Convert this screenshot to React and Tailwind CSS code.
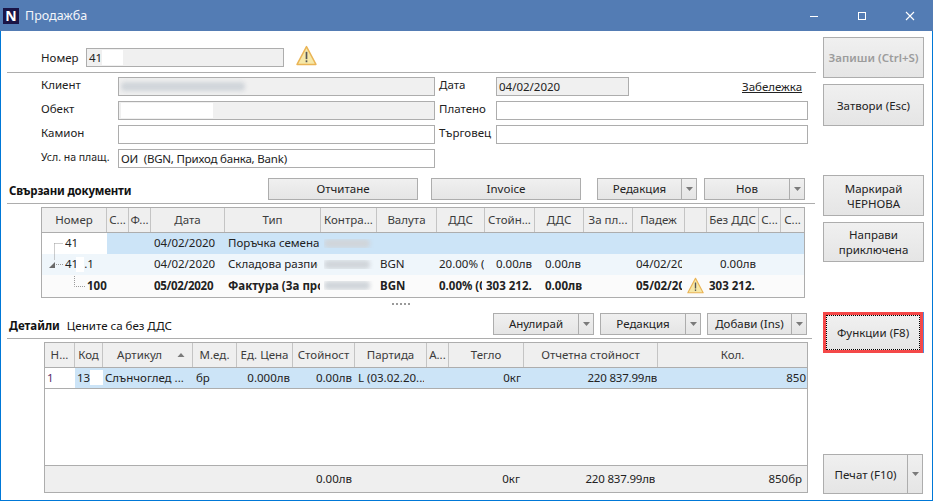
import React from "react";

const FONT = "font-['Noto_Sans','Open_Sans',sans-serif]";

function Warn({ className = "" }) {
  return (
    <svg viewBox="0 0 20 20" className={className}>
      <path d="M10 1.5 L19 18.5 L1 18.5 Z" fill="#f6e8a8" stroke="#eab455" strokeWidth="1.4" strokeLinejoin="round" />
      <rect x="9.2" y="6.5" width="1.6" height="7" fill="#555" />
      <rect x="9.2" y="14.6" width="1.6" height="1.8" fill="#555" />
    </svg>
  );
}

function Caret({ className = "w-[7px] h-[4px]", up }) {
  return (
    <svg viewBox="0 0 7 4" className={className}>
      <path d={up ? "M0 4H7L3.5 0Z" : "M0 0H7L3.5 4Z"} fill="#7a7a7a" />
    </svg>
  );
}

const btn = "border border-[#adadad] bg-gradient-to-b from-[#f0f0f0] to-[#e5e5e5] flex items-center justify-center text-center leading-[15px] shrink-0";

function Split({ w, label }) {
  return (
    <div className={`${btn} h-[22px] !justify-start text-[#222]`} style={{ width: w }}>
      <div className="flex-1 text-center whitespace-nowrap pb-[2px]">{label}</div>
      <div className="w-[15px] h-full border-l border-[#adadad] flex items-center justify-center shrink-0">
        <Caret />
      </div>
    </div>
  );
}

function Input({ w, disabled, children }) {
  return (
    <div
      className={`h-[19px] border border-[#adadad] flex items-center pl-[2px] overflow-hidden whitespace-nowrap shrink-0 ${disabled ? "bg-[#f0f0f0]" : "bg-white"}`}
      style={{ width: w }}
    >
      {children}
    </div>
  );
}

function Blur({ w }) {
  return <div className="h-[9px] bg-[#d0d5da] blur-[2px] rounded-sm shrink-0" style={{ width: w }} />;
}

function White({ w, h = 15 }) {
  return <span className="inline-block bg-white shrink-0" style={{ width: w, height: h }} />;
}

const topCols = [65, 22, 22, 74, 96, 56, 60, 48, 50, 49, 49, 52, 22, 52, 22, 23];
const topHead = ["Номер", "С...", "Ф...", "Дата", "Тип", "Контра...", "Валута", "ДДС", "Стойн...", "ДДС", "За пл...", "Падеж", "", "Без ДДС", "С...", "С..."];
const botCols = [30, 28, 90, 44, 56, 62, 72, 22, 75, 134, 149];
const botHead = ["Н...", "Код", "Артикул", "М.ед.", "Ед. Цена", "Стойност", "Партида", "А...", "Тегло", "Отчетна стойност", "Кол."];

function Head({ cols, labels }) {
  return (
    <div className="flex h-[25px] bg-[#efefef] border-b border-[#adadad] text-[#3c3c3c]">
      {cols.map((w, i) => (
        <div
          key={i}
          className={`relative border-r border-[#c4c4c4] last:border-r-0 flex items-center justify-center overflow-hidden whitespace-nowrap shrink-0 ${labels[i] === "Артикул" ? "pr-[16px]" : ""}`}
          style={{ width: w }}
        >
          {labels[i]}
          {labels[i] === "Артикул" ? <Caret up className="absolute right-[7px] top-[10px] w-[8px] h-[4px]" /> : null}
        </div>
      ))}
    </div>
  );
}

function Cell({ w, right, pad = 3, pr = 3, children, className = "" }) {
  return (
    <div className={`shrink-0 flex items-center h-full pb-[1px] ${className}`} style={{ width: w, paddingLeft: pad, paddingRight: pr }}>
      <div className={`w-full overflow-hidden whitespace-nowrap flex items-center ${right ? "justify-end" : ""}`}>{children}</div>
    </div>
  );
}

function Row1() {
  return (
    <div className="flex h-[21px] items-center">
      <Cell w={65} pad={23} className="bg-white relative">
        <span>41</span><White w={10} h={15} />
      </Cell>
      <div className="flex-1 h-full bg-[#cce4f7] flex items-center">
        <Cell w={22} /><Cell w={22} />
        <Cell w={74}>04/02/2020</Cell>
        <Cell w={96} pr={1}>Поръчка семена</Cell>
        <Cell w={56}><Blur w={46} /></Cell>
      </div>
    </div>
  );
}

function Row2() {
  return (
    <div className="flex h-[21px] items-center bg-[#eff6fb]">
      <Cell w={65} pad={23}>
        <span>41</span><span className="-ml-[2px] flex"><White w={8} h={15} /></span><span>.1</span>
      </Cell>
      <Cell w={22} /><Cell w={22} />
      <Cell w={74}>04/02/2020</Cell>
      <Cell w={96}>Складова разпис</Cell>
      <Cell w={56}><Blur w={46} /></Cell>
      <Cell w={60}>BGN</Cell>
      <Cell w={48} pad={2} pr={1}>20.00% (0</Cell>
      <Cell w={50} right>0.00лв</Cell>
      <Cell w={49} right>0.00лв</Cell>
      <Cell w={49} />
      <Cell w={52}>04/02/2020</Cell>
      <Cell w={22} />
      <Cell w={52} right>0.00лв</Cell>
    </div>
  );
}

function Row3() {
  return (
    <div className="flex h-[22px] items-center bg-[#fbfbfb] font-bold">
      <Cell w={65} pad={45} pr={0}>100</Cell>
      <Cell w={22} /><Cell w={22} />
      <Cell w={74} pad={3} pr={0}><span className="tracking-[-0.3px]">05/02/2020</span></Cell>
      <Cell w={96} pr={1}>Фактура (За продажба)</Cell>
      <Cell w={56}><Blur w={46} /></Cell>
      <Cell w={60}>BGN</Cell>
      <Cell w={48} pad={2} pr={3}>0.00% (0%)</Cell>
      <Cell w={50} pad={1} pr={1}>303 212.</Cell>
      <Cell w={49} right pr={2}>0.00лв</Cell>
      <Cell w={49} />
      <Cell w={52}>05/02/2020</Cell>
      <Cell w={22} pad={2} pr={0}><Warn className="w-[17px] h-[17px] shrink-0" /></Cell>
      <Cell w={52} pad={2} pr={1}>303 212.</Cell>
    </div>
  );
}

function SectionRule({ w = 808 }) {
  return <div className="ml-[6px] h-px bg-[#adadad]" style={{ width: w }} />;
}

export default function App() {
  return (
    <div className={`w-[933px] h-[501px] flex flex-col bg-white text-[11.5px] leading-[16px] text-[#222] overflow-hidden ${FONT}`}>
      {/* Title bar */}
      <div className="h-[31px] bg-[#537cb4] flex items-center shrink-0">
        <div className="ml-[3px] w-[16px] h-[16px] bg-[#1a1446] text-white font-bold text-[14px] flex items-center justify-center leading-none">N</div>
        <div className="ml-[6px] text-[#f2f5fa] text-[12.5px]">Продажба</div>
        <div className="ml-auto flex items-center">
          <svg viewBox="0 0 10 10" className="w-[10px] h-[10px] mr-[38px]"><path d="M1 5.5H9" stroke="#fff" strokeWidth="1" /></svg>
          <svg viewBox="0 0 10 10" className="w-[10px] h-[10px] mr-[38px]"><rect x="1.5" y="1.5" width="7" height="7" fill="none" stroke="#fff" strokeWidth="1" /></svg>
          <svg viewBox="0 0 10 10" className="w-[10px] h-[10px] mr-[18px]"><path d="M1 1L9 9M9 1L1 9" stroke="#fff" strokeWidth="1.1" /></svg>
        </div>
      </div>

      {/* Body */}
      <div className="flex-1 flex border-x border-b border-[#0078d7] min-h-0">
        {/* Left column */}
        <div className="w-[815px] shrink-0">
          <div className="mt-[17px] ml-[40px] flex items-center h-[19px]">
            <div className="w-[45px]">Номер</div>
            <Input w={198} disabled>
              <span>41</span><White w={21} />
            </Input>
            <Warn className="ml-[12px] -mt-[5px] w-[21px] h-[21px] shrink-0" />
          </div>
          <div className="mt-[5px]"><SectionRule w={809} /></div>

          <div className="mt-[4px] ml-[40px] flex flex-col gap-[5px]">
            <div className="flex items-center">
              <div className="w-[77px] -mt-[4px]">Клиент</div>
              <Input w={317} disabled><Blur w={124} /></Input>
              <div className="ml-[4px] w-[57px] -mt-[4px]">Дата</div>
              <Input w={133} disabled>04/02/2020</Input>
              <div className="ml-[113px] underline whitespace-nowrap">Забележка</div>
            </div>
            <div className="flex items-center">
              <div className="w-[77px] -mt-[4px]">Обект</div>
              <Input w={317} disabled><White w={92} /></Input>
              <div className="ml-[4px] w-[57px] -mt-[4px]">Платено</div>
              <Input w={312} />
            </div>
            <div className="flex items-center">
              <div className="w-[77px] -mt-[4px]">Камион</div>
              <Input w={317} />
              <div className="ml-[4px] w-[57px] -mt-[4px]">Търговец</div>
              <Input w={312} />
            </div>
            <div className="flex items-center">
              <div className="w-[77px] text-[10.5px] whitespace-nowrap -mt-[4px]">Усл. на плащ.</div>
              <Input w={317}><span className="tracking-[-0.2px]">ОИ&nbsp; (BGN, Приход банка, Bank)</span></Input>
            </div>
          </div>

          {/* Linked documents */}
          <div className="mt-[10px] ml-[8px] flex items-center h-[22px]">
            <div className="w-[259px] font-bold self-end leading-[18px] text-[#111] whitespace-nowrap tracking-[-0.2px]">Свързани документи</div>
            <div className={`${btn} w-[150px] h-[22px] pb-[2px]`}>Отчитане</div>
            <div className={`${btn} w-[150px] h-[22px] ml-[13px] pb-[2px]`}>Invoice</div>
            <div className="ml-[16px]"><Split w={100} label="Редакция" /></div>
            <div className="ml-[7px]"><Split w={101} label="Нов" /></div>
          </div>
          <div className="mt-[3px]"><SectionRule /></div>

          <div className="mt-[3px] ml-[40px] w-[764px] h-[91px] border border-[#adadad]">
            <Head cols={topCols} labels={topHead} />
            <div className="relative">
              <svg viewBox="0 0 50 64" className="absolute left-0 top-0 w-[50px] h-[64px] z-10 pointer-events-none">
                <path d="M12.5 10.5H21M12.5 10.5V27M12 31.5H21M32.5 43V53.5H43" fill="none" stroke="#9a9a9a" strokeWidth="1" strokeDasharray="1 1" />
                <path d="M7 35L13 29V35Z" fill="#6a6a6a" />
              </svg>
              <Row1 />
              <Row2 />
              <Row3 />
            </div>
          </div>

          <div className="h-[15px] ml-[391px] flex items-start pt-[5px] gap-[2px]">
            {[0, 1, 2, 3, 4].map((i) => (
              <span key={i} className="w-[2px] h-[2px] bg-[#9a9a9a]" />
            ))}
          </div>

          {/* Details */}
          <div className="ml-[8px] flex items-center h-[22px]">
            <div className="w-[484px] flex self-end leading-[18px] whitespace-nowrap">
              <span className="font-bold text-[#111]">Детайли</span>
              <span className="ml-[7px] text-[#111]">Цените са без ДДС</span>
            </div>
            <Split w={101} label="Анулирай" />
            <div className="ml-[6px]"><Split w={101} label="Редакция" /></div>
            <div className="ml-[6px]"><Split w={100} label="Добави (Ins)" /></div>
          </div>
          <div className="mt-[3px]"><SectionRule w={805} /></div>

          <div className="mt-[3px] ml-[43px] w-[764px] h-[151px] border border-[#adadad] flex flex-col">
            <Head cols={botCols} labels={botHead} />
            <div className="flex h-[21px] items-center border-b border-[#adadad]">
              <Cell w={30} pad={2} className="bg-white text-[#5a2a6a]">1</Cell>
              <div className="flex-1 h-full bg-[#cce4f7] flex items-center">
                <Cell w={28} pad={2} pr={0}><span>13</span><White w={15} h={15} /></Cell>
                <Cell w={90} pad={2}>Слънчоглед ...</Cell>
                <Cell w={44}>бр</Cell>
                <Cell w={56} right>0.000лв</Cell>
                <Cell w={62} right>0.00лв</Cell>
                <Cell w={72}>L (03.02.20...</Cell>
                <Cell w={22} />
                <Cell w={75} right>0кг</Cell>
                <Cell w={134} right pr={1}><span className="tracking-[-0.2px]">220 837.99лв</span></Cell>
                <Cell w={149} right pr={1}>850</Cell>
              </div>
            </div>
            <div className="flex-1" />
            <div className="h-[27px] flex items-center bg-[#efefef] border-t border-[#adadad]">
              <Cell w={310} right>0.00лв</Cell>
              <Cell w={169} right pad={3}><span className="mr-[1px]">0кг</span></Cell>
              <Cell w={134} right><span className="tracking-[-0.2px]">220 837.99лв</span></Cell>
              <Cell w={149} right><span className="mr-[2px]">850бр</span></Cell>
            </div>
          </div>
        </div>

        {/* Right column */}
        <div className="pl-[7px] flex flex-col">
          <div className={`${btn} mt-[6px] w-[101px] h-[41px] font-semibold text-[#9c9c9c] whitespace-nowrap`}>Запиши (Ctrl+S)</div>
          <div className={`${btn} mt-[6px] w-[101px] h-[42px] whitespace-nowrap`}>Затвори (Esc)</div>
          <div className={`${btn} mt-[49px] w-[101px] h-[41px]`}>Маркирай<br />ЧЕРНОВА</div>
          <div className={`${btn} mt-[6px] w-[101px] h-[40px]`}>Направи<br />приключена</div>
          <div className="mt-[50px] w-[100px] h-[41px] border-[3px] border-[#f44848] shadow-[1px_0_0_#4a8fe0]">
            <div className="w-full h-full border border-dotted border-black bg-gradient-to-b from-[#f0f0f0] to-[#e5e5e5] flex items-center justify-center whitespace-nowrap">
              Функции (F8)
            </div>
          </div>
          <div className={`${btn} mt-[101px] w-[100px] h-[40px] !justify-start`}>
            <div className="flex-1 whitespace-nowrap">Печат (F10)</div>
            <div className="w-[15px] h-full border-l border-[#adadad] flex items-center justify-center shrink-0"><Caret /></div>
          </div>
        </div>
      </div>
    </div>
  );
}
